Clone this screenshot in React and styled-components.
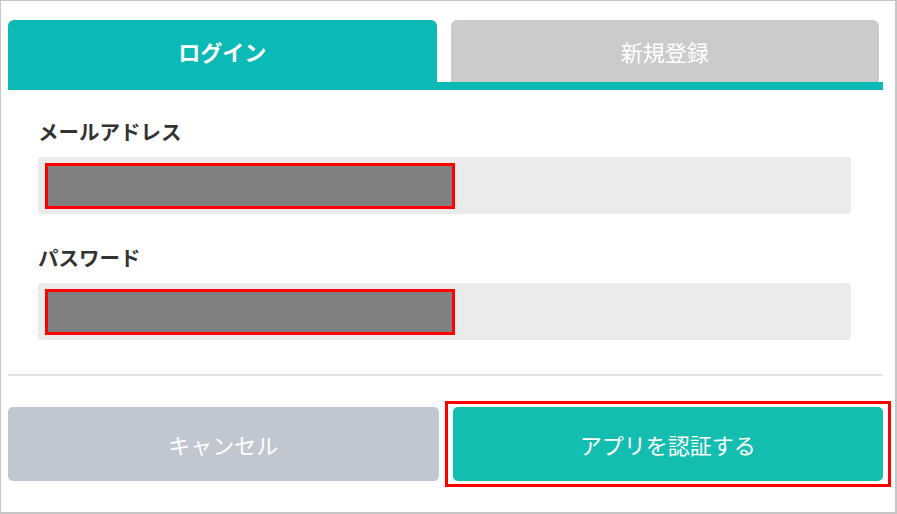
import React, {useState} from 'react';
import styled, {createGlobalStyle} from "styled-components";

const GlobalStyle = createGlobalStyle`
  html, body {
    margin: 0;
    padding: 0;
    background: #ffffff;
  }
  * {
    box-sizing: border-box;
  }
`;

function App() {
  const [tab, setTab] = useState("login");

  return <>
    <GlobalStyle />
    <Frame>
      <Tabs>
        <Tab active={tab === "login"} onClick={() => setTab("login")}>ログイン</Tab>
        <Tab active={tab === "signup"} onClick={() => setTab("signup")}>新規登録</Tab>
      </Tabs>
      <TabBar />

      <Form>
        <Field>
          <Label>メールアドレス</Label>
          <InputBox>
            <Redacted />
          </InputBox>
        </Field>
        <Field>
          <Label>パスワード</Label>
          <InputBox>
            <Redacted />
          </InputBox>
        </Field>
      </Form>

      <Divider />

      <Actions>
        <Slot>
          <Button variant="cancel">キャンセル</Button>
        </Slot>
        <Slot highlighted>
          <Button variant="primary">アプリを認証する</Button>
        </Slot>
      </Actions>
    </Frame>
  </>
}

const Frame = styled.div`
  width: 897px;
  height: 514px;
  border: 1px solid #c6c6c6;
  border-right-width: 2px;
  border-bottom-width: 2px;
  padding: 19px 12px 0 7px;
  font-family: "Noto Sans CJK JP", "Noto Sans", sans-serif;
  background: #ffffff;
`;

const Tabs = styled.div`
  display: flex;
  gap: 14px;
  padding-right: 4px;
`;

const Tab = styled.div`
  flex: 1;
  height: 62px;
  display: flex;
  align-items: center;
  justify-content: center;
  border-radius: 6px 6px 0 0;
  font-size: 22px;
  color: #ffffff;
  cursor: pointer;
  font-weight: ${p => p.active ? 700 : 400};
  background-color: ${p => p.active ? "#0bbab5" : "#cbcbcb"};
`;

const TabBar = styled.div`
  height: 8px;
  background-color: #0bbab5;
`;

const Form = styled.div`
  display: flex;
  flex-direction: column;
  gap: 29px;
  padding: 27px 32px 0 30px;
`;

const Field = styled.div`
  display: flex;
  flex-direction: column;
  gap: 11px;
`;

const Label = styled.label`
  font-size: 20.5px;
  line-height: 29px;
  font-weight: 700;
  color: #333333;
`;

const InputBox = styled.div`
  height: 57px;
  background-color: #ebebeb;
  border-radius: 4px;
  padding: 6px 7px;
`;

const Redacted = styled.div`
  width: 410px;
  height: 46px;
  background-color: #808080;
  border: 3px solid #ff0000;
`;

const Divider = styled.div`
  margin-top: 34px;
  height: 2px;
  background-color: #e3e3e3;
`;

const Actions = styled.div`
  display: flex;
  gap: 14px;
  margin-top: 31px;
`;

const Slot = styled.div`
  position: relative;
  flex: 1 1 0;
  min-width: 0;
  display: flex;

  &::after {
    content: "";
    display: ${p => p.highlighted ? "block" : "none"};
    position: absolute;
    left: -8px;
    right: -8px;
    top: -6px;
    bottom: -6px;
    border: 3px solid #ff0000;
    pointer-events: none;
  }
`;

const Button = styled.button`
  flex: 1;
  height: 74px;
  padding: 0;
  border: none;
  border-radius: 5px;
  font-family: inherit;
  font-size: 22px;
  color: #ffffff;
  cursor: pointer;
  background-color: ${p => p.variant === "primary" ? "#13beb1" : "#c1c7d1"};
`;

export default App
